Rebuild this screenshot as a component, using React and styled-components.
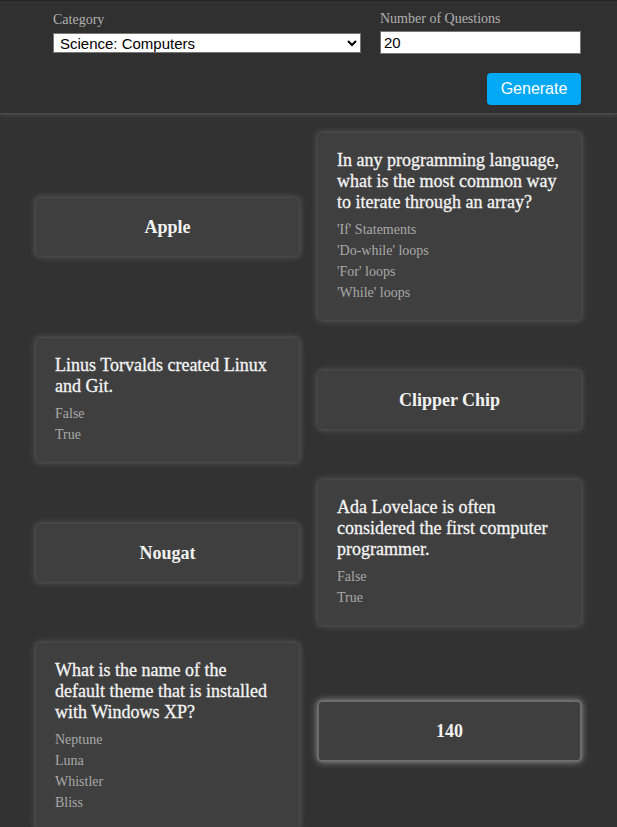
import React from "react";
import styled, { createGlobalStyle } from "styled-components";

const GlobalStyle = createGlobalStyle`
   body {
      margin: 0;
      background-color: #323232;
      font-family: "Liberation Serif", "Times New Roman", serif;
   }
`;

// STYLES
const Header = styled.header`
   background-color: #303030;
   border-top: 1px solid #242424;
   border-bottom: 1px solid #4e4e4e;
   box-shadow: 0 1px 4px rgba(255, 255, 255, 0.14);
   height: 114px;
   box-sizing: border-box;
   padding: 9px 36px 0 53px;
`;

const Form = styled.form`
   display: flex;
   flex-direction: column;
   align-items: flex-end;
`;

const Fields = styled.div`
   display: flex;
   align-items: center;
   gap: 19px;
   width: 100%;
`;

const Field = styled.label`
   display: flex;
   flex-direction: column;
   width: ${(props) => props.width}px;
   color: #b0b0b0;
   font-size: 14px;
   line-height: 18px;

   & span {
      margin-bottom: ${(props) => props.gap || 4}px;
   }
`;

const Select = styled.select`
   height: 20px;
   font-family: "Liberation Sans", Arial, sans-serif;
   font-size: 15px;
   color: #000;
   background: #fff;
   border: 1px solid #767676;
   border-radius: 0;
   padding: 0 2px;
`;

const Input = styled.input`
   height: 23px;
   box-sizing: border-box;
   font-family: "Liberation Sans", Arial, sans-serif;
   font-size: 15px;
   color: #000;
   background: #fff;
   border: 1px solid #767676;
   padding: 0 3px;
`;

const Button = styled.button`
   margin-top: 19px;
   width: 94px;
   height: 32px;
   border: none;
   border-radius: 4px;
   background-color: #03a9f4;
   color: #fff;
   font-family: "Liberation Sans", Arial, sans-serif;
   font-size: 16px;
   cursor: pointer;
`;

const Grid = styled.main`
   width: 547px;
   margin: 0 auto;
   padding: 18px 0;
   display: grid;
   grid-template-columns: 265px 265px;
   column-gap: 17px;
   row-gap: 16px;
   align-items: center;
`;

const Card = styled.div`
   box-sizing: border-box;
   background-color: #3f3f3f;
   border: ${(props) => (props.active ? "2px solid #6c6c6c" : "1px solid #484848")};
   border-radius: 5px;
   box-shadow: ${(props) =>
      props.active
         ? "0 0 7px rgba(255, 255, 255, 0.45)"
         : "0 0 6px rgba(255, 255, 255, 0.2)"};
   padding: 17px 19px;
   transform: ${(props) => (props.active ? "translateY(-6px)" : "none")};
`;

const Answer = styled.div`
   text-align: center;
   color: #f2f2f2;
   font-size: 18px;
   font-weight: bold;
   line-height: 24px;
`;

const Question = styled.h2`
   margin: 0 0 6px;
   color: #f4f4f4;
   font-size: 18px;
   font-weight: normal;
   line-height: 21px;
   -webkit-text-stroke: 0.3px #f4f4f4;
`;

const Options = styled.ul`
   list-style: none;
   margin: 0;
   padding: 0;
`;

const Option = styled.li`
   color: #a9a9a9;
   font-size: 14px;
   line-height: 21px;
`;

const cards = [
   { answer: "Apple" },
   {
      question: "In any programming language, what is the most common way to iterate through an array?",
      options: ["'If' Statements", "'Do-while' loops", "'For' loops", "'While' loops"],
   },
   { question: "Linus Torvalds created Linux and Git.", options: ["False", "True"] },
   { answer: "Clipper Chip" },
   { answer: "Nougat" },
   {
      question: "Ada Lovelace is often considered the first computer programmer.",
      options: ["False", "True"],
   },
   {
      question: "What is the name of the default theme that is installed with Windows XP?",
      options: ["Neptune", "Luna", "Whistler", "Bliss"],
   },
   { answer: "140", active: true },
];

const App = () => {
   return (
      <>
         <GlobalStyle />
         <Header>
            <Form onSubmit={(e) => e.preventDefault()}>
               <Fields>
                  <Field width={308} gap={4}>
                     <span>Category</span>
                     <Select defaultValue="computers">
                        <option value="computers">Science: Computers</option>
                        <option value="general">General Knowledge</option>
                     </Select>
                  </Field>
                  <Field width={201} gap={3}>
                     <span>Number of Questions</span>
                     <Input type="number" defaultValue="20" />
                  </Field>
               </Fields>
               <Button type="submit">Generate</Button>
            </Form>
         </Header>
         <Grid>
            {cards.map((card, i) => (
               <Card key={i} active={card.active}>
                  {card.answer ? (
                     <Answer>{card.answer}</Answer>
                  ) : (
                     <>
                        <Question>{card.question}</Question>
                        <Options>
                           {card.options.map((o) => (
                              <Option key={o}>{o}</Option>
                           ))}
                        </Options>
                     </>
                  )}
               </Card>
            ))}
         </Grid>
      </>
   );
};

export default App;
